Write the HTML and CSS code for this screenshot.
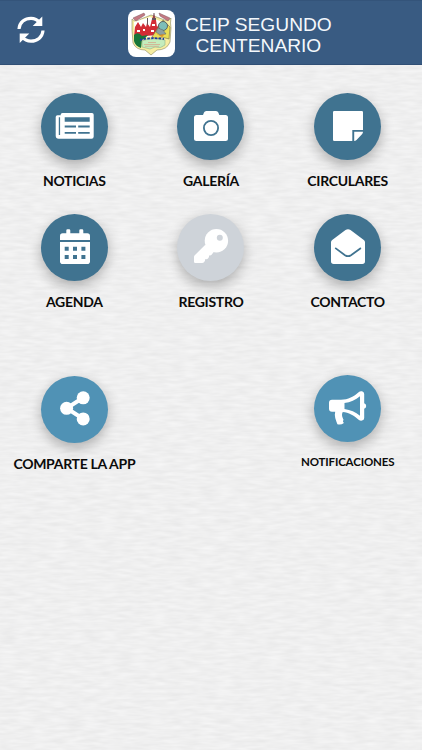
FILE: index.html
```html
<!DOCTYPE html>
<html lang="es">
  <head>
    <meta charset="UTF-8" />
    <meta name="viewport" content="width=device-width, initial-scale=1.0" />
    <title>CEIP Segundo Centenario</title>
    <link rel="stylesheet" href="styles.css">
  </head>
  <body>
    <!-- Textura de papel del fondo -->
    <svg class="paper" aria-hidden="true">
      <filter id="grain" x="0" y="0" width="100%" height="100%" color-interpolation-filters="sRGB">
        <feTurbulence type="fractalNoise" baseFrequency="0.06 0.3" numOctaves="2" seed="8" />
        <feColorMatrix values="0.065 0 0 0 0.905  0.065 0 0 0 0.905  0.065 0 0 0 0.906  0 0 0 0 1" />
      </filter>
      <rect width="100%" height="100%" filter="url(#grain)" />
    </svg>

    <header class="topbar">
      <button class="refresh" aria-label="Actualizar">
        <svg viewBox="0 0 28 28">
          <path class="arc" d="M2 13C2.5 6 8 2.3 14 2.3C18 2.3 21 4.4 23 6.8M26 14.5C25.5 21.5 20 25.2 14 25.2C10 25.2 7 23.3 5 20.8" />
          <path d="M25.3 0.5V10H15.7ZM2.7 27V17.5H12.3Z" />
        </svg>
      </button>
      <div class="brand">
        <div class="logo">
          <svg viewBox="0 0 47 47">
            <path fill="#f6eda0" stroke="#8b8660" stroke-width=".6" d="M4 9Q8 13 13 9L23 5L34 9Q40 12 43 8Q42 13 43 18L42 32Q39 40 29 40L23 45L17 40Q8 40 5 33L4 20Z" />
            <path fill="#fff" d="M6 12L22 7L34 12L27 26L7 29Z" />
            <path fill="#d22c36" d="M6 27L7 17L10 12L13 17L15 13L18 17L19 13L22 17L24 9L26 4L28 10L29 17L31 14L33 19L29 25L18 26Z" />
            <path fill="#fff" d="M9 20H12V22H9ZM15 19H17V21H15ZM24 14H27V16H24ZM23 20H26V22H23Z" />
            <path fill="#64545b" d="M25.5 3H26.5V8H28V10H24V8H25.5ZM19 8H20V15H19Z" />
            <path fill="#16763a" d="M6 25Q10 21 14 26L20 25Q17 29 14 30L13 38Q7 36 6 31Z" />
            <path fill="#eade54" stroke="#716c49" stroke-width=".6" d="M24 27L35 10L42 17L41 29L34 27L29 29Z" />
            <circle cx="35" cy="16" r="4.5" fill="#7cbeb8" stroke="#5d6662" />
            <path fill="#8d9fa0" stroke="#546460" stroke-width=".5" d="M30 18L35 20L38 24L32 25L28 22Z" />
            <path fill="#dd922a" d="M27 23L32 25L37 24L34 27Z" />
            <path fill="#c47982" stroke="#7e5860" stroke-width=".5" d="M5 8L16 3L17 5L8 11ZM31 3L42 8L40 11L32 6Z" />
            <path fill="#c4edbd" stroke="#82a47d" stroke-width=".5" d="M14 31Q23 27 37 30L37 35Q33 39 27 37L22 39L14 37Z" />
            <path fill="none" stroke="#1f38a0" stroke-width="1.8" stroke-dasharray="2.5 1.3" d="M12 30Q22 27 36 29" />
            <path fill="none" stroke="#d4a98d" stroke-width=".8" d="M20 32.5H28M16 34.5H32M17 36.3H31" />
          </svg>
        </div>
        <h1>CEIP SEGUNDO<br>CENTENARIO</h1>
      </div>
    </header>

    <main class="menu">
      <a class="item">
        <span class="circle">
          <svg viewBox="0 0 67 67">
            <path d="M21.5 20H51Q52.7 20 52.7 21.7V43.5Q52.7 45.7 50.5 45.7H17.7Q14.7 45.7 14.7 42.7V24Q14.7 22.3 16.5 22.3H19.7V21.5Q19.7 20 21.5 20Z" />
            <path class="cut" d="M17.8 24.3H19.1V42H17.8ZM23.7 24.3H48.7V28.8H23.7ZM23.7 32.6H35V34.4H23.7ZM37.2 32.6H48.7V34.4H37.2ZM23.7 39H35V40.8H23.7ZM37.2 39H48.7V40.8H37.2Z" />
          </svg>
        </span>
        <span class="label">NOTICIAS</span>
      </a>
      <a class="item">
        <span class="circle">
          <svg viewBox="0 0 67 67">
            <path d="M19.5 22H26L27 19.5Q27.6 18 29.3 18H39Q40.7 18 41.3 19.5L42.3 22H48.5Q51 22 51 24.5V45.5Q51 48 48.5 48H19.5Q17 48 17 45.5V24.5Q17 22 19.5 22Z" />
            <circle class="cut-line" cx="34" cy="35" r="7.1" />
          </svg>
        </span>
        <span class="label">GALERÍA</span>
      </a>
      <a class="item">
        <span class="circle">
          <svg viewBox="0 0 67 67">
            <path d="M20.2 18H47.8Q49 18 49 19.2V36.9H38.3V48H20.2Q19 48 19 46.8V19.2Q19 18 20.2 18Z" />
            <path d="M40.2 38.8H49Q49 40.2 48 41.2L42.5 46.9Q41.5 48 40.2 48Z" />
          </svg>
        </span>
        <span class="label">CIRCULARES</span>
      </a>
      <a class="item">
        <span class="circle">
          <svg viewBox="0 0 67 67">
            <path d="M19 26V22Q19 19.3 21.7 19.3H25.3V16.5Q25.3 15.3 26.5 15.3H28.1Q29.3 15.3 29.3 16.5V19.3H38.3V16.5Q38.3 15.3 39.5 15.3H41.1Q42.3 15.3 42.3 16.5V19.3H46.3Q49 19.3 49 22V26Z" />
            <path d="M19 28H49V47.2Q49 50 46.3 50H21.7Q19 50 19 47.2Z" />
            <path class="cut" d="M23.7 32.7H27.7V36.7H23.7ZM32 32.7H36V36.7H32ZM40.4 32.7H44.4V36.7H40.4ZM23.7 41H27.7V45H23.7ZM32 41H36V45H32ZM40.4 41H44.4V45H40.4Z" />
          </svg>
        </span>
        <span class="label">AGENDA</span>
      </a>
      <a class="item">
        <span class="circle disabled">
          <svg viewBox="0 0 67 67">
            <circle cx="39.4" cy="26.8" r="11.7" />
            <path d="M28.3 30.8L17.5 41.5Q17 42 17 43V47.8Q17 49 18.2 49H25.2Q26.3 49 27 48.2L28 46.8V45.3H29.2Q30.4 45.3 31 44.5L32 43V41.6H33Q34 41.4 34.6 40.8L36.7 38Z" />
            <circle class="cut" cx="42.8" cy="23.8" r="3" />
          </svg>
        </span>
        <span class="label">REGISTRO</span>
      </a>
      <a class="item">
        <span class="circle">
          <svg viewBox="0 0 67 67">
            <path d="M17 28.3Q17 27 18.2 26.1L31.5 16Q34 14.3 36.5 16L49.8 26.1Q51 27 51 28.3V47.3Q51 50 48.3 50H19.7Q17 50 17 47.3Z" />
            <path class="cut-line" d="M21.8 34.4L31 41.2Q34 43.2 37 41.2L46.3 34.4" />
          </svg>
        </span>
        <span class="label">CONTACTO</span>
      </a>
    </main>

    <section class="menu extra">
      <a class="item share">
        <span class="circle">
          <svg viewBox="0 0 67 67">
            <path class="link" d="M42 21.8L25.7 32.3L42 42.8" />
            <circle cx="25.6" cy="32.3" r="6.5" />
            <circle cx="42.2" cy="21.8" r="6.5" />
            <circle cx="42.2" cy="42.9" r="6.5" />
          </svg>
        </span>
        <span class="label">COMPARTE LA APP</span>
      </a>
      <a class="item notify">
        <span class="circle">
          <svg viewBox="0 0 67 67">
            <path d="M18 24.7H27C34 24.7 40 21.5 44.6 17.2Q46.2 15.8 48 16.3Q50.2 17 50.2 19V28.3Q52.2 29 52.2 31T50.2 33.7V43Q50.2 45 48 45.6Q46.2 46 44.6 44.7C40 40.4 34.5 37.4 28.8 37C27.2 39.5 28.5 42.5 29.5 44.4Q28.2 46.5 29.9 48Q27 50.2 23.4 49.2C21.8 45 20 41 21.2 36.8H18Q15 36.8 15 33.8V27.7Q15 24.7 18 24.7Z" />
            <path class="cut" d="M30.5 28.1C36.5 27.3 41.5 24.8 46 21.2V40.7C41.5 37.1 36.5 34.7 30.5 33.9Z" />
          </svg>
        </span>
        <span class="label">NOTIFICACIONES</span>
      </a>
    </section>
  </body>
</html>
```
FILE: styles.css
```css
body {
  margin: 0;
  min-height: 100vh;
  background-color: #efefef;
  font-family: Lato, sans-serif;
  color: #0b0b0b;
}
.paper {
  position: absolute;
  top: 0;
  left: 0;
  width: 100%;
  height: 100%;
  z-index: -1;
}
.topbar {
  display: flex;
  align-items: center;
  box-sizing: border-box;
  height: 65px;
  padding-left: 17px;
  background-color: #395b82;
  border-top: 1px solid #34547a;
  border-bottom: 1px solid #304f75;
}
.refresh {
  width: 28px;
  height: 28px;
  padding: 0;
  margin-top: -5px;
  border: none;
  background: none;
}
.refresh svg {
  display: block;
  fill: #fff;
}
.refresh .arc {
  fill: none;
  stroke: #fff;
  stroke-width: 3.2;
}
.brand {
  display: flex;
  align-items: center;
  margin-left: 83px;
}
.logo {
  width: 47px;
  height: 47px;
  margin-top: 2px;
  border-radius: 8px;
  background-color: #fff;
  overflow: hidden;
}
.logo svg {
  display: block;
}
h1 {
  margin: 5px 0 0 10px;
  font-family: "Liberation Sans", Arial, sans-serif;
  font-size: 19.2px;
  font-weight: normal;
  line-height: 21px;
  text-align: center;
  color: #f4f8fc;
}
.menu {
  display: grid;
  grid-template-columns: repeat(3, 1fr);
  grid-auto-rows: 121px;
  padding: 28px 6px 0;
}
.item {
  display: flex;
  flex-direction: column;
  align-items: center;
}
.circle {
  --color: #407390;
  width: 67px;
  height: 67px;
  border-radius: 50%;
  background-color: var(--color);
  box-shadow: 0 5px 13px rgba(0, 0, 0, 0.28);
}
.circle svg {
  display: block;
  fill: #fff;
}
.circle .cut {
  fill: var(--color);
}
.circle .cut-line {
  fill: none;
  stroke: var(--color);
  stroke-width: 1.8;
  stroke-linecap: round;
}
.circle .link {
  fill: none;
  stroke: #fff;
  stroke-width: 4;
}
.disabled {
  --color: #ced3d9;
}
.label {
  margin-top: 12px;
  font-size: 14px;
  font-weight: bold;
  line-height: 18px;
  letter-spacing: -0.3px;
  white-space: nowrap;
}
.extra {
  padding-top: 40px;
}
.extra .circle {
  --color: #5092b5;
}
.share {
  padding-top: 1px;
}
.notify {
  grid-column: 3;
}
.notify .label {
  margin-top: 11px;
  font-size: 11.5px;
  letter-spacing: -0.15px;
}
```
